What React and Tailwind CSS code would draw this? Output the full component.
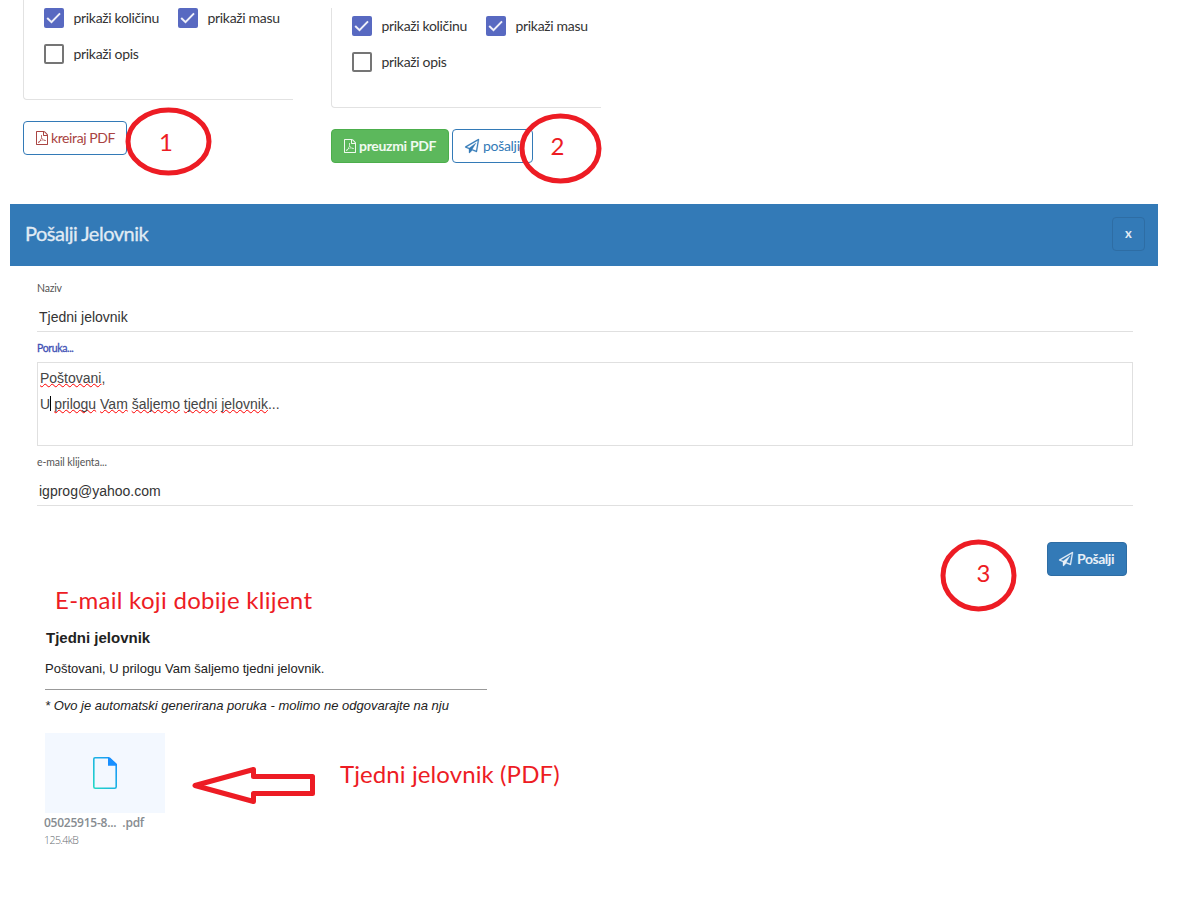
import React from "react";

function PdfIcon({ className = "" }) {
  return (
    <svg viewBox="0 0 1792 1792" fill="currentColor" className={"h-[14px] w-[14px] shrink-0 " + className}>
      <path d="M1596 380q28 28 48 76t20 88v1152q0 40-28 68t-68 28h-1344q-40 0-68-28t-28-68v-1600q0-40 28-68t68-28h896q40 0 88 20t76 48zm-444-244v376h376q-10-29-22-41l-313-313q-12-12-41-22zm384 1528v-1024h-416q-40 0-68-28t-28-68v-416h-768v1536h1280zm-514-593q33 26 84 56 59-7 117-7 147 0 177 49 16 22 2 52 0 1-1 2l-2 2v1q-6 38-71 38-48 0-115-20t-130-53q-221 24-392 83-153 262-242 262-15 0-28-7l-24-12q-1-1-6-5-10-10-6-36 9-40 56-91.5t132-96.5q14-9 23 6 2 2 2 4 52-85 107-197 68-136 104-262-24-82-30.5-159.5t6.5-127.5q11-40 42-40h22q23 0 35 15 18 21 9 68-2 6-4 8 1 3 1 8v30q-2 123-14 192 55 164 146 238zm-576 411q52-24 137-158-51 40-87.5 84t-49.5 74zm398-920q-15 42-2 132 1-7 7-44 0-3 7-43 1-4 4-8-1-1-1-2-1-2-1-3-1-22-13-36 0 1-1 2v2zm-124 661q135-54 284-81-2-1-13-9.5t-16-13.5q-76-67-127-176-27 86-83 197-30 56-45 83zm646-16q-24-24-140-24 76 28 124 28 14 0 18-1 0-1-2-3z" />
    </svg>
  );
}

function SendIcon() {
  return (
    <svg viewBox="0 0 1792 1792" fill="currentColor" stroke="currentColor" strokeWidth="40" className="h-[14px] w-[14px] shrink-0 overflow-visible">
      <path d="M1764 11q33 24 27 64l-256 1536q-5 29-32 45-14 8-31 8-11 0-24-5l-527-215-298 327q-18 21-47 21-14 0-23-4-19-7-30-23.5t-11-36.5v-452l-472-193q-37-14-40-55-3-39 32-59l1664-960q35-21 68 2zm-342 1499l221-1323-1434 827 336 137 863-639-478 797z" />
    </svg>
  );
}

function Check({ label, checked = false, className = "" }) {
  return (
    <label className={"flex h-5 items-center gap-[9.5px] tracking-[-0.32px] " + className}>
      {checked ? (
        <span className="h-5 w-5 shrink-0 rounded-[2px] bg-[#5869c1]">
          <svg viewBox="0 0 20 20" fill="none" stroke="#eff0f9" strokeWidth="2" className="h-5 w-5">
            <path d="M3.2 10 L7.5 14.2 L16 5.4" />
          </svg>
        </span>
      ) : (
        <span className="h-5 w-5 shrink-0 rounded-[2px] border-2 border-[#757575]" />
      )}
      <span className="whitespace-nowrap text-[14px] leading-5 text-[#333]">{label}</span>
    </label>
  );
}

function Options({ className }) {
  return (
    <div className={"w-[270px] rounded-bl-[4px] border-b border-l border-[#e2e2e2] pl-5 " + className}>
      <div className="flex">
        <Check checked label="prikaži količinu" className="w-[134px]" />
        <Check checked label="prikaži masu" />
      </div>
      <Check label="prikaži opis" className="mt-4" />
    </div>
  );
}

function Ring({ n, className, rx, ry, numClass }) {
  return (
    <div className={"absolute " + className}>
      <svg width={rx * 2 + 6} height={ry * 2 + 6} className="block">
        <ellipse cx={rx + 3} cy={ry + 3} rx={rx} ry={ry} fill="none" stroke="#ed1c24" strokeWidth="5" />
      </svg>
      <span className={"absolute text-[24px] leading-6 text-[#ed1c24] " + numClass}>{n}</span>
    </div>
  );
}

function Miss({ children }) {
  return (
    <span className="underline decoration-[#f00] decoration-wavy decoration-[1px] underline-offset-[0px] [text-decoration-skip-ink:none]">
      {children}
    </span>
  );
}

export default function App() {
  return (
    <div className="relative h-[905px] w-[1193px] overflow-hidden bg-white font-[Lato,sans-serif]">
      <section className="flex h-[204px] gap-[38px] pl-[23px]">
        <div>
          <Options className="h-[100px] pt-2" />
          <button className="mt-[21px] flex h-[34px] w-[104px] items-center gap-[2px] whitespace-nowrap rounded-[4px] border border-[#337ab7] pl-[11px] text-[14px] tracking-[-0.4px] text-[#a94442]">
            <PdfIcon />
            <span className="-mt-[2px]">kreiraj PDF</span>
          </button>
        </div>
        <div className="pt-2">
          <Options className="h-[100px] pt-2" />
          <div className="mt-[21px] flex gap-[3px]">
            <button className="flex h-[34px] w-[118px] items-center gap-[2px] whitespace-nowrap rounded-[4px] border border-[#4cae4c] bg-[#5cb85c] pl-[11px] text-[14px] font-bold tracking-[-0.32px] text-[#f0faf0]">
              <PdfIcon />
              <span className="-mt-[2px]">preuzmi PDF</span>
            </button>
            <button className="flex h-[34px] w-[81px] items-center gap-[4px] whitespace-nowrap rounded-[4px] border border-[#337ab7] pl-[12px] text-[14px] tracking-[-0.3px] text-[#337ab7]">
              <SendIcon />
              <span className="-mt-[2px]">pošalji</span>
            </button>
          </div>
        </div>
      </section>

      <header className="ml-[10px] flex h-[62px] w-[1148px] items-center justify-between bg-[#337ab7] pl-[15px] pr-[13px]">
        <h1 className="mb-[4px] text-[20px] leading-6 tracking-[-0.5px] text-[#e1ebf4] [-webkit-text-stroke:0.3px_#e1ebf4]">Pošalji Jelovnik</h1>
        <button className="mb-[2px] h-[34px] w-[33px] rounded-[4px] border border-[#2e6da4] text-[13px] font-bold text-[#e1ebf4]">x</button>
      </header>

      <main className="ml-[37px] w-[1096px]">
        <div className="pt-[15px] text-[10.5px] leading-[14px] tracking-[-0.2px] text-[#555]">Naziv</div>
        <div className="mt-[9px] h-[28px] border-b border-[#e0e0e0] pl-[2px] pt-[3px] font-['Liberation_Sans',sans-serif] text-[14px] leading-[20px] text-[#333]">Tjedni jelovnik</div>
        <div className="mt-[9px] text-[10.5px] leading-[14px] tracking-[-0.35px] text-[#3f51b5] [-webkit-text-stroke:0.3px_#3f51b5]">Poruka...</div>
        <div className="mt-[7px] h-[84px] border border-[#e0e0e0] pl-[2px] pt-[2px] font-['Liberation_Sans',sans-serif] text-[14px] leading-[26px] text-[#444]">
          <div><Miss>Poštovani</Miss>,</div>
          <div className="flex">
            <span>U</span>
            <span className="mr-[3px] mt-[5px] h-[15px] w-px bg-black" />
            <span><Miss>prilogu</Miss> <Miss>Vam</Miss> <Miss>šaljemo</Miss> <Miss>tjedni</Miss> <Miss>jelovnik</Miss>...</span>
          </div>
        </div>
        <div className="mt-[9px] text-[10.5px] leading-[14px] tracking-[-0.1px] text-[#555]">e-mail klijenta...</div>
        <div className="mt-[9px] h-[28px] border-b border-[#e0e0e0] pl-[2px] pt-[3px] font-['Liberation_Sans',sans-serif] text-[14px] leading-[20px] text-[#333]">igprog@yahoo.com</div>
        <div className="flex justify-end pr-[6px] pt-[36px]">
          <button className="flex h-[34px] w-[80px] items-center gap-[4px] whitespace-nowrap rounded-[4px] border border-[#2e6da4] bg-[#337ab7] pl-[11px] text-[14px] font-bold tracking-[-0.45px] text-[#e8f0f7]">
            <SendIcon />
            <span className="-mt-[2px]">Pošalji</span>
          </button>
        </div>
      </main>

      <section className="ml-[45px] w-[442px] font-['Liberation_Sans',sans-serif] text-[#222]">
        <div className="ml-[10px] mt-[9px] whitespace-nowrap font-[Lato,sans-serif] text-[24px] leading-[30px] tracking-[0.3px] text-[#ed1c24]">E-mail koji dobije klijent</div>
        <h2 className="ml-px mt-[13px] text-[15px] font-bold leading-5">Tjedni jelovnik</h2>
        <p className="mt-[12px] text-[13px] leading-[18px]">Poštovani, U prilogu Vam šaljemo tjedni jelovnik.</p>
        <hr className="mt-[11px] border-t border-[#999]" />
        <p className="mt-[7px] whitespace-nowrap text-[13px] italic leading-[18px]">* Ovo je automatski generirana poruka - molimo ne odgovarajte na nju</p>
      </section>

      <section className="ml-[45px] mt-[18px] flex">
        <div className="w-[120px]">
          <div className="flex h-[80px] items-center justify-center bg-[#f3f8ff]">
            <svg width="24" height="32" viewBox="0 0 24 32" fill="none">
              <defs>
                <linearGradient id="page" x1="1" y1="0" x2="0" y2="1">
                  <stop offset="0" stopColor="#188fff" />
                  <stop offset="1" stopColor="#21d9c5" />
                </linearGradient>
              </defs>
              <path d="M2 .8H15.5L23.2 8V29.700Q23.2 31.200 21.7 31.200H2.3Q.8 31.200 .8 29.700V2Q.8 .8 2 .8Z" stroke="url(#page)" strokeWidth="1.6" />
              <path d="M15 0.5V8.8H24V7L17 .5Z" fill="#188fff" />
            </svg>
          </div>
          <div className="-ml-px mt-[2px] whitespace-nowrap font-['Open_Sans',sans-serif] text-[12px] font-semibold leading-4 tracking-[-0.24px] text-[#878c91]">05025915-8...<span className="ml-[6px]">.pdf</span></div>
          <div className="-ml-px mt-[2px] font-['Open_Sans',sans-serif] text-[10.5px] font-light leading-[14px] tracking-[-0.55px] text-[#666b70]">125.4kB</div>
        </div>
        <svg width="124" height="40" viewBox="0 0 124 40" fill="none" className="ml-[27px] mt-[32px] overflow-visible">
          <path d="M3 20.500L61.500 4.500V11.500H120.500V28.500H61.500V36.500Z" stroke="#ed1c24" strokeWidth="5" strokeLinejoin="round" />
        </svg>
        <div className="ml-[24px] mt-[26px] whitespace-nowrap text-[24px] leading-[30px] tracking-[0.1px] text-[#ed1c24]">Tjedni jelovnik (PDF)</div>
      </section>

      <Ring n="1" className="left-[124.500px] top-[107px]" rx={40.5} ry={31.5} numClass="left-[34.500px] top-[23px]" />
      <Ring n="2" className="left-[518.500px] top-[113px]" rx={38.5} ry={32.5} numClass="left-[32px] top-[21px]" />
      <Ring n="3" className="left-[940px] top-[538.500px]" rx={35.5} ry={33.5} numClass="left-[36.500px] top-[22.500px]" />
    </div>
  );
}
